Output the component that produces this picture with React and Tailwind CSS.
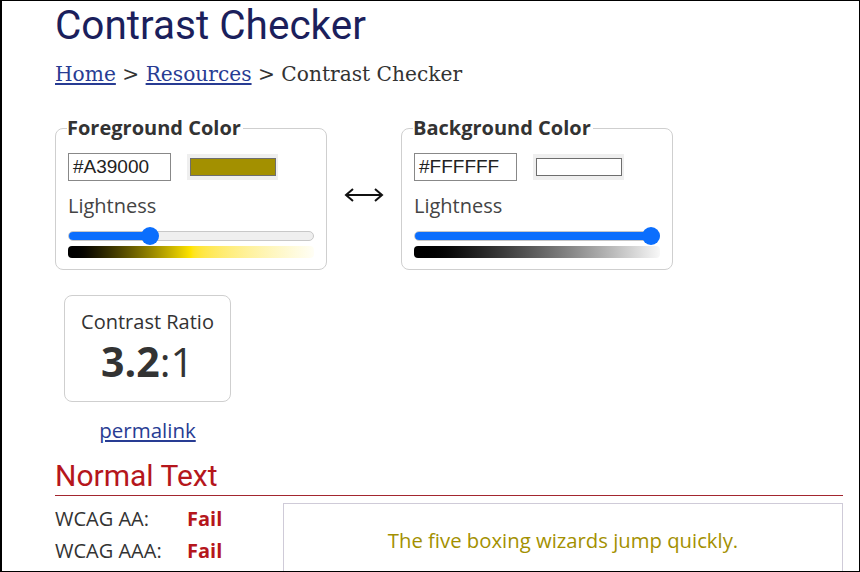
import React from "react";

const openSans = { fontFamily: '"Open Sans", "Noto Sans", sans-serif' };

function Slider({ pct, gradient }) {
  return (
    <div className="mt-[8px]">
      <div className="relative h-[18px] flex items-center">
        <div className="w-full h-[10px] rounded-full bg-[#efefef] border border-[#c8c8c8] overflow-hidden">
          <div className="h-full bg-[#0b6efd]" style={{ width: `${pct}%` }} />
        </div>
        <div
          className="absolute top-0 w-[18px] h-[18px] rounded-full bg-[#0b6efd]"
          style={{ left: `calc(${pct}% - 9px)` }}
        />
      </div>
      <div className={`mt-[1px] h-[12px] rounded-[4px] ${gradient}`} />
    </div>
  );
}

function ColorBox({ title, hex, swatch, pct, gradient }) {
  return (
    <fieldset className="w-[272px] h-[154px] border border-[#cfcfcf] rounded-[8px] px-3 pb-3">
      <legend className="text-[20px] font-bold text-[#333] leading-[24px] -ml-px pr-[2px]">{title}</legend>
      <div className="flex items-center gap-4 mt-[13px]">
        <div className="w-[103px] h-[28px] border border-[#888] px-[4px] flex items-center text-[19px] text-[#222]" style={{ fontFamily: '"Liberation Sans", Arial, sans-serif' }}>
          {hex}
        </div>
        <div className="w-[91px] h-[26px] bg-[#efefef] flex items-center justify-center">
          <div className={`w-[86px] h-[18px] border border-[#6e6e6e] ${swatch}`} />
        </div>
      </div>
      <div className="mt-[12px] text-[20px] text-[#444] leading-[26px]">Lightness</div>
      <Slider pct={pct} gradient={gradient} />
    </fieldset>
  );
}

export default function App() {
  return (
    <div className="w-[860px] h-[572px] overflow-hidden bg-white border border-black border-l-2" style={openSans}>
      <div className="ml-[53px] w-[788px]">
        <h1 className="text-[40.5px] leading-[44px] text-[#1b1f5c] mt-[2px]" style={{ fontFamily: "Roboto, sans-serif" }}>
          Contrast Checker
        </h1>
        <div className="mt-[15px] text-[20.2px] text-[#333] leading-[24px]" style={{ fontFamily: '"DejaVu Serif", serif' }}>
          <a className="text-[#283c93] underline" href="#">Home</a> &gt;{" "}
          <a className="text-[#283c93] underline" href="#">Resources</a> &gt; Contrast Checker
        </div>

        <div className="flex items-center mt-[30px]">
          <ColorBox
            title="Foreground Color"
            hex="#A39000"
            swatch="bg-[#a39000]"
            pct={33.5}
            gradient="bg-gradient-to-r from-black via-[#ffe400] to-[#fffef5]"
          />
          <div className="w-[74px] flex justify-center pt-[3px] text-[#111]">
            <svg width="40" height="16" viewBox="0 0 40 16" fill="none" stroke="currentColor" strokeWidth="2">
              <path d="M2 8h36M9 2 2 8l7 6M31 2l7 6-7 6" />
            </svg>
          </div>
          <ColorBox
            title="Background Color"
            hex="#FFFFFF"
            swatch="bg-white"
            pct={96.5}
            gradient="bg-gradient-to-r from-black to-[#f8f8f8]"
          />
        </div>

        <div className="ml-[9px] mt-[25px] w-[167px] h-[107px] border border-[#cfcfcf] rounded-[8px] flex flex-col items-center">
          <div className="mt-[13px] text-[20px] text-[#333] leading-[26px]">Contrast Ratio</div>
          <div className="mt-[3px] text-[41px] leading-[46px] text-[#333]">
            <span className="font-bold">3.2</span>:1
          </div>
        </div>
        <div className="ml-[9px] w-[167px] text-center mt-[13px]">
          <a className="text-[20.5px] text-[#283c93] underline" href="#">permalink</a>
        </div>

        <h2 className="mt-[12px] text-[30px] leading-[36px] text-[#b5161c] pb-[1px]" style={{ fontFamily: "Roboto, sans-serif" }}>
          Normal Text
        </h2>
        <div className="h-px bg-[#a3262f]" />
        <div className="flex mt-[7px]">
          <div className="w-[228px] text-[20px] text-[#333] leading-[32px]">
            <div className="flex"><span className="w-[132px]">WCAG AA:</span><span className="font-bold text-[#b5161c]">Fail</span></div>
            <div className="flex"><span className="w-[132px]">WCAG AAA:</span><span className="font-bold text-[#b5161c]">Fail</span></div>
          </div>
          <div className="flex-1 h-[80px] border border-[#cfcbd8] flex items-center justify-center pb-[6px]">
            <span className="text-[20.3px] text-[#a39000]">The five boxing wizards jump quickly.</span>
          </div>
        </div>
      </div>
    </div>
  );
}
